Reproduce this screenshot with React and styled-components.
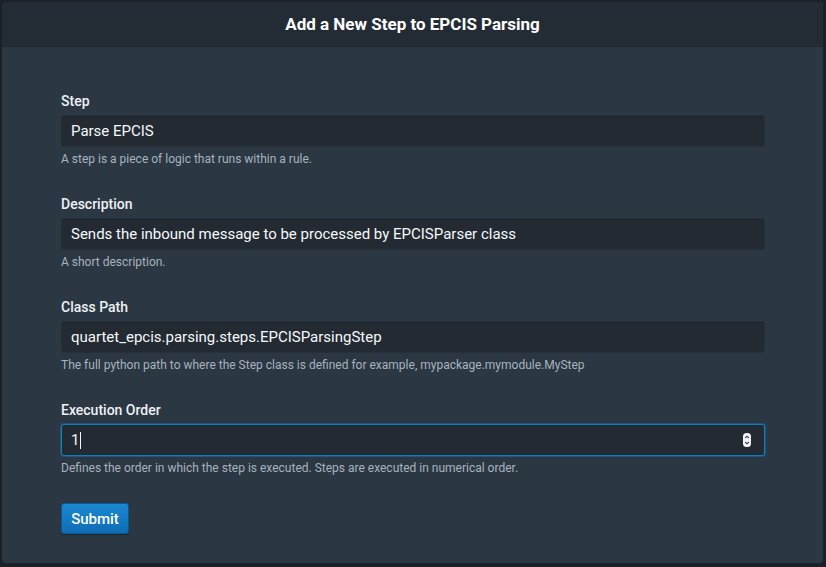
import React from "react";
import styled, { createGlobalStyle } from "styled-components";

const GlobalStyle = createGlobalStyle`
  html, body {
    margin: 0;
    padding: 0;
    background-color: #1c2127;
    font-family: Roboto, "Liberation Sans", sans-serif;
  }
`;

const fields = [
  {
    label: "Step",
    value: "Parse EPCIS",
    help: "A step is a piece of logic that runs within a rule.",
  },
  {
    label: "Description",
    value: "Sends the inbound message to be processed by EPCISParser class",
    help: "A short description.",
  },
  {
    label: "Class Path",
    value: "quartet_epcis.parsing.steps.EPCISParsingStep",
    help: "The full python path to where the Step class is defined for example, mypackage.mymodule.MyStep",
  },
  {
    label: "Execution Order",
    value: "1",
    help: "Defines the order in which the step is executed. Steps are executed in numerical order.",
    focused: true,
    number: true,
  },
];

const Spinner = () => (
  <SpinIcon width="8" height="14" viewBox="0 0 8 14">
    <rect x="0" y="0" width="8" height="14" rx="3.5" fill="#f2f4f6" />
    <path d="M2.2 5 L4 3.2 L5.8 5" stroke="#3b4550" strokeWidth="1.1" fill="none" />
    <path d="M2.2 9 L4 10.8 L5.8 9" stroke="#3b4550" strokeWidth="1.1" fill="none" />
  </SpinIcon>
);

const App = () => {
  return (
    <>
      <GlobalStyle />
      <Page>
        <Card>
          <Header>
            <h2>Add a New Step to EPCIS Parsing</h2>
          </Header>
          <Body>
            {fields.map((field) => (
              <Group key={field.label}>
                <Label>{field.label}</Label>
                <InputBox focused={field.focused}>
                  <span>{field.value}</span>
                  {field.focused && <Caret />}
                  {field.number && <Spinner />}
                </InputBox>
                <Help>{field.help}</Help>
              </Group>
            ))}
            <SubmitButton type="button">Submit</SubmitButton>
          </Body>
        </Card>
      </Page>
    </>
  );
};

const Page = styled.div`
  padding: 2px 3px 4px 2px;
  height: 561px;
`;

const Card = styled.div`
  height: 100%;
  display: flex;
  flex-direction: column;
  background-color: #2b3743;
  border-radius: 4px;
  overflow: hidden;
`;

const Header = styled.div`
  height: 44px;
  flex-shrink: 0;
  display: flex;
  align-items: center;
  justify-content: center;
  background-color: #232c35;
  border-bottom: 1px solid #202830;

  h2 {
    margin: 0;
    color: #ffffff;
    font-size: 17px;
    font-weight: 700;
  }
`;

const Body = styled.div`
  padding: 44px 58px 0 59px;
  display: flex;
  flex-direction: column;
`;

const Group = styled.div`
  display: flex;
  flex-direction: column;
  margin-bottom: 27px;
`;

const Label = styled.label`
  color: #eef1f4;
  font-size: 14px;
  font-weight: 500;
  line-height: 20px;
  margin-bottom: 4px;
`;

const InputBox = styled.div`
  position: relative;
  height: 32px;
  box-sizing: border-box;
  display: flex;
  align-items: center;
  padding: 0 9px;
  background-color: #232a32;
  border: 1px solid ${(p) => (p.focused ? "#137cbd" : "#26303a")};
  border-radius: 3px;
  box-shadow: ${(p) =>
    p.focused ? "0 0 0 1px rgba(19, 124, 189, 0.45)" : "inset 0 1px 1px rgba(0,0,0,0.15)"};
  color: #f5f8fa;
  font-size: 15px;
`;

const Caret = styled.span`
  display: inline-block;
  width: 1px;
  height: 17px;
  margin-left: 1px;
  background-color: #f5f8fa;
`;

const SpinIcon = styled.svg`
  position: absolute;
  right: 13px;
  top: 8px;
`;

const Help = styled.div`
  margin-top: 4px;
  color: #a7b3bd;
  font-size: 12px;
  line-height: 16px;
`;

const SubmitButton = styled.button`
  align-self: flex-start;
  margin-top: 0;
  height: 31px;
  width: 68px;
  padding: 0;
  border: 1px solid #0b5a96;
  border-radius: 3px;
  background: linear-gradient(to bottom, #1a88d2, #0e6db4);
  box-shadow: 0 1px 1px rgba(0, 0, 0, 0.3);
  color: #ffffff;
  font-family: Roboto, "Liberation Sans", sans-serif;
  font-size: 15px;
  font-weight: 500;
`;

export default App;
